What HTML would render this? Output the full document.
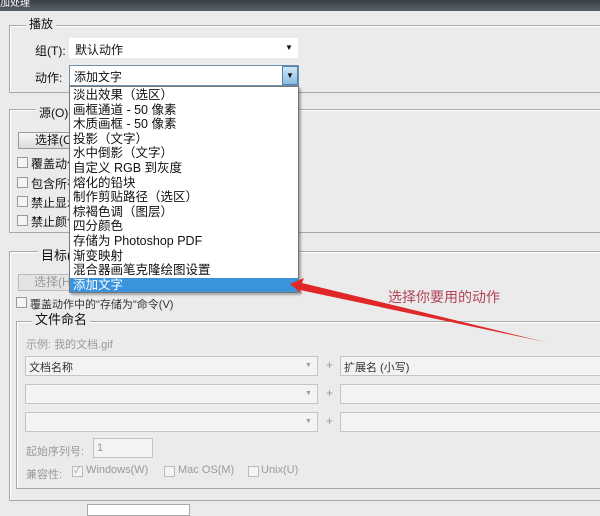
<!DOCTYPE html>
<html><head><meta charset="utf-8"><style>
*{margin:0;padding:0;box-sizing:border-box}
body{width:600px;height:511px;overflow:hidden;background:#ebebeb;position:relative;font-family:"Liberation Sans","Noto Sans CJK SC",sans-serif;font-size:12px;color:#111}
.a{position:absolute;white-space:nowrap}
.grp{position:absolute;border:1px solid #a8a8a8;box-shadow:1px 1px 0 #fff inset}
.lbl{position:absolute;background:#ebebeb;padding:0 3px;line-height:14px}
.cb{position:absolute;width:11px;height:11px;border:1px solid #9a9a9a;background:#f4f4f4}
.sel{position:absolute;background:#f3f3f3;border:1px solid #c4c4c4}
.dis{color:#9a9a9a}
.li{height:14.6px;line-height:14.6px;padding-left:3px;font-size:12.5px}
</style></head><body>
<div class="a" style="left:0;top:0;width:600px;height:11px;background:linear-gradient(#3a4048,#5a6068)"></div>
<div class="a" style="left:0;top:0;font-size:10px;color:#fff;line-height:8px">加处理</div>

<div class="grp" style="left:9px;top:25px;width:600px;height:68px"></div>
<div class="lbl" style="left:26px;top:17px">播放</div>
<div class="a" style="left:35px;top:42px">组(T):</div>
<div class="a" style="left:69px;top:38px;width:229px;height:20px;background:#fff"></div>
<div class="a" style="left:75px;top:41px">默认动作</div>
<div class="a" style="left:285px;top:43px;font-size:8px">▼</div>
<div class="a" style="left:35px;top:69px">动作:</div>
<div class="a" style="left:69px;top:65px;width:230px;height:21px;background:#fff;border:1px solid #6d8fb0"></div>
<div class="a" style="left:74px;top:68px">添加文字</div>
<div class="a" style="left:282px;top:66px;width:16px;height:19px;background:linear-gradient(#cfe6f7,#8cbde0);border:1px solid #4f82ad;font-size:8px;text-align:center;line-height:17px">▼</div>

<div class="grp" style="left:9px;top:109px;width:600px;height:124px"></div>
<div class="lbl" style="left:36px;top:106px">源(O)</div>
<div class="a" style="left:18px;top:132px;width:55px;height:17px;border:1px solid #999;background:linear-gradient(#f6f6f6,#dcdcdc);padding-left:16px;line-height:15px">选择(C</div>
<div class="cb" style="left:17px;top:157px"></div><div class="a" style="left:31px;top:155px">覆盖动作</div>
<div class="cb" style="left:17px;top:177px"></div><div class="a" style="left:31px;top:175px">包含所有</div>
<div class="cb" style="left:17px;top:196px"></div><div class="a" style="left:31px;top:194px">禁止显示</div>
<div class="cb" style="left:17px;top:215px"></div><div class="a" style="left:31px;top:213px">禁止颜色</div>

<div class="grp" style="left:9px;top:251px;width:600px;height:250px"></div>
<div class="lbl" style="left:38px;top:249px;font-size:13px">目标(</div>
<div class="a" style="left:18px;top:274px;width:55px;height:17px;border:1px solid #bbb;background:#e4e4e4;padding-left:15px;line-height:15px;color:#999">选择(H</div>
<div class="cb" style="left:16px;top:297px"></div>
<div class="a" style="left:30px;top:296px;font-size:11px;color:#333">覆盖动作中的"存储为"命令(V)</div>

<div class="grp" style="left:16px;top:321px;width:600px;height:168px"></div>
<div class="lbl" style="left:32px;top:313px;font-size:13px">文件命名</div>
<div class="a dis" style="left:26px;top:336px;font-size:11px">示例: 我的文档.gif</div>
<div class="sel" style="left:25px;top:356px;width:293px;height:20px"></div>
<div class="a" style="left:29px;top:359px;font-size:11px;color:#333">文档名称</div>
<div class="sel" style="left:25px;top:384px;width:293px;height:20px"></div>
<div class="sel" style="left:25px;top:412px;width:293px;height:20px"></div>
<div class="a dis" style="left:305px;top:362px;font-size:7px">▼</div>
<div class="a dis" style="left:305px;top:390px;font-size:7px">▼</div>
<div class="a dis" style="left:305px;top:418px;font-size:7px">▼</div>
<div class="a dis" style="left:326px;top:358px">+</div><div class="a dis" style="left:326px;top:386px">+</div><div class="a dis" style="left:326px;top:414px">+</div>
<div class="sel" style="left:340px;top:356px;width:270px;height:20px"></div>
<div class="sel" style="left:340px;top:384px;width:270px;height:20px"></div>
<div class="sel" style="left:340px;top:412px;width:270px;height:20px"></div>
<div class="a" style="left:344px;top:359px;font-size:11px;color:#333">扩展名 (小写)</div>
<div class="a dis" style="left:26px;top:443px;font-size:11px">起始序列号:</div>
<div class="sel" style="left:93px;top:438px;width:60px;height:20px"></div>
<div class="a dis" style="left:97px;top:442px;font-size:11px">1</div>
<div class="a dis" style="left:26px;top:466px;font-size:11px">兼容性:</div>
<div class="cb" style="left:72px;top:466px;border-color:#bbb"></div><div class="a dis" style="left:74px;top:463px;font-size:9px">✓</div>
<div class="a dis" style="left:86px;top:464px;font-size:11px">Windows(W)</div>
<div class="cb" style="left:164px;top:466px;border-color:#bbb"></div>
<div class="a dis" style="left:178px;top:464px;font-size:11px">Mac OS(M)</div>
<div class="cb" style="left:248px;top:466px;border-color:#bbb"></div>
<div class="a dis" style="left:261px;top:464px;font-size:11px">Unix(U)</div>
<div class="a" style="left:87px;top:504px;width:103px;height:12px;background:#fff;border:1px solid #aaa"></div>

<div class="a" style="left:69px;top:86px;width:230px;height:207px;background:#fff;border:1px solid #777;box-shadow:2px 2px 2px rgba(0,0,0,.3);padding-top:1px">
<div class="li">淡出效果（选区）</div>
<div class="li">画框通道 - 50 像素</div>
<div class="li">木质画框 - 50 像素</div>
<div class="li">投影（文字）</div>
<div class="li">水中倒影（文字）</div>
<div class="li">自定义 RGB 到灰度</div>
<div class="li">熔化的铅块</div>
<div class="li">制作剪贴路径（选区）</div>
<div class="li">棕褐色调（图层）</div>
<div class="li">四分颜色</div>
<div class="li">存储为 Photoshop PDF</div>
<div class="li">渐变映射</div>
<div class="li">混合器画笔克隆绘图设置</div>
<div class="li" style="background:#3a93dc;color:#fff">添加文字</div>
</div>

<svg class="a" style="left:0;top:0" width="600" height="511">
<polygon points="290,284 304,278 302,283 545,342 300,290 302,294" fill="#e02828"/>
</svg>
<div class="a" style="left:388px;top:287px;font-size:14px;color:#b04456">选择你要用的动作</div>
</body></html>
